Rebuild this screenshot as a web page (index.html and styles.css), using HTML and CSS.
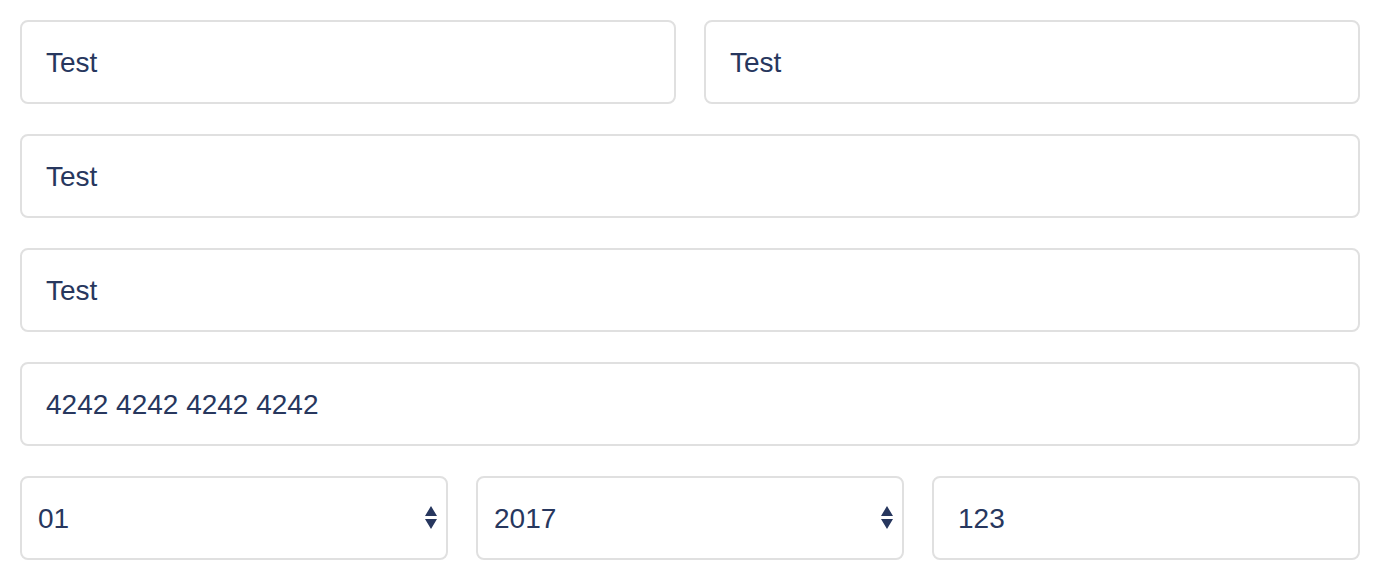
FILE: index.html
```html
<!DOCTYPE html>
<html>
<head>
<meta charset="utf-8">
<link rel="stylesheet" href="styles.css">
</head>
<body>
<form class="form">
  <div class="row two">
    <div class="field">Test</div>
    <div class="field">Test</div>
  </div>
  <div class="row"><div class="field">Test</div></div>
  <div class="row"><div class="field">Test</div></div>
  <div class="row"><div class="field">4242 4242 4242 4242</div></div>
  <div class="row three">
    <div class="field select"><span>01</span>
      <svg class="arrows" width="14" height="26" viewBox="0 0 14 26"><path d="M7 1 L13 11 L1 11 Z M1 14 L13 14 L7 24 Z" fill="#27375e"/></svg>
    </div>
    <div class="field select"><span>2017</span>
      <svg class="arrows" width="14" height="26" viewBox="0 0 14 26"><path d="M7 1 L13 11 L1 11 Z M1 14 L13 14 L7 24 Z" fill="#27375e"/></svg>
    </div>
    <div class="field">123</div>
  </div>
</form>
</body>
</html>
```

FILE: styles.css
```css
html, body {
  margin: 0;
  padding: 0;
  background: #ffffff;
}
.form {
  padding: 20px 24px 0 20px;
  display: flex;
  flex-direction: column;
  gap: 30px;
  font-family: "Liberation Sans", Arial, sans-serif;
}
.row {
  display: grid;
  grid-template-columns: 1fr;
  gap: 28px;
}
.row.two {
  grid-template-columns: 1fr 1fr;
}
.row.three {
  grid-template-columns: 1fr 1fr 1fr;
}
.field {
  min-width: 0;
  height: 84px;
  box-sizing: border-box;
  border: 2px solid #e0e0e0;
  border-radius: 8px;
  padding: 2px 24px 0;
  display: flex;
  align-items: center;
  font-size: 28px;
  color: #27375e;
}
.select {
  padding: 2px 8px 0 16px;
  justify-content: space-between;
}
.arrows {
  display: block;
  margin-top: -2px;
}
```
